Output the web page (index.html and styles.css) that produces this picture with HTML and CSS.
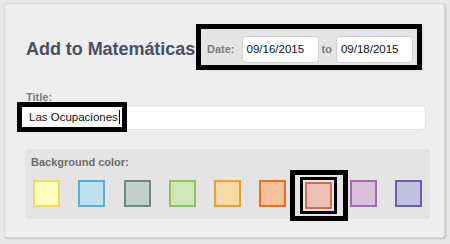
FILE: index.html
```html
<!DOCTYPE html>
<html>
<head>
<meta charset="utf-8">
<link rel="stylesheet" href="styles.css">
</head>
<body>
<div class="panel">
  <div class="header">
    <h1 class="heading">Add to Matemáticas</h1>
    <div class="date-box">
      <span class="label">Date:</span>
      <div class="field date-field">09/16/2015</div>
      <span class="label to">to</span>
      <div class="field date-field">09/18/2015</div>
    </div>
  </div>
  <div class="label title-label">Title:</div>
  <div class="field title-field">Las Ocupaciones<span class="caret"></span></div>
  <div class="bg-section">
    <div class="label">Background color:</div>
    <div class="swatches">
      <div class="swatch" style="background:#ffffbf;border-color:#f0dc5a"></div>
      <div class="swatch" style="background:#bfe0f0;border-color:#5aafd9"></div>
      <div class="swatch" style="background:#c0d0cd;border-color:#6b8a80"></div>
      <div class="swatch" style="background:#d0e8b8;border-color:#8fc35d"></div>
      <div class="swatch" style="background:#f8d9a8;border-color:#f0a02a"></div>
      <div class="swatch" style="background:#f8c09a;border-color:#f26d1c"></div>
      <div class="swatch selected" style="background:#ebc1b5;border-color:#d26b52"></div>
      <div class="swatch" style="background:#dbc0dc;border-color:#a26db0"></div>
      <div class="swatch" style="background:#c0c0e0;border-color:#6a5fb0"></div>
    </div>
  </div>
  <div class="mark mark-date"></div>
  <div class="mark mark-title"></div>
</div>
</body>
</html>
```
FILE: styles.css
```css
* { box-sizing: border-box; }
html, body { margin: 0; padding: 0; }
body {
  background: #e8e8e8;
  font-family: "Liberation Sans", Arial, Helvetica, sans-serif;
  width: 450px;
  height: 244px;
  overflow: hidden;
  padding: 3px 0 0 4px;
}
.panel {
  position: relative;
  width: 441px;
  height: 235px;
  background: #eeeeee;
  border: 1px solid #d8d8d8;
  border-radius: 3px;
  box-shadow: 1px 1px 2px rgba(0,0,0,0.18);
  padding: 23px 14px 0 15px;
}
.header {
  display: flex;
  align-items: center;
  justify-content: space-between;
  height: 44px;
}
.heading {
  margin: 1px 0 0 6px;
  font-size: 18px;
  font-weight: bold;
  color: #4a5060;
  letter-spacing: -0.05px;
}
.date-box {
  display: flex;
  align-items: center;
  width: 225px;
  height: 44px;
  margin-right: 6px;
  padding: 0 0 0 8px;
  background: #e4e4e4;
  border-radius: 2px;
}
.label {
  font-size: 11px;
  line-height: 13px;
  font-weight: bold;
  color: #7d7d7d;
}
.date-box .label { margin-right: 7px; }
.date-box .to { margin: 0 4px 0 3px; }
.field {
  background: #fff;
  border: 1px solid #d2d2d2;
  border-radius: 4px;
  font-size: 11.5px;
  color: #111;
}
.date-field {
  width: 77px;
  height: 27px;
  line-height: 25px;
  padding-left: 4px;
}
.title-label {
  margin: 20px 0 0 6px;
}
.title-field {
  width: 406px;
  height: 25px;
  line-height: 23px;
  padding-left: 8px;
  border-color: #e2e2e2;
  border-radius: 5px;
  box-shadow: inset 0 1px 1px rgba(0,0,0,0.06);
  margin-top: 1px;
}
.caret {
  display: inline-block;
  width: 1px;
  height: 14px;
  background: #000;
  vertical-align: -3px;
  margin-left: 1px;
}
.bg-section {
  margin: 19px 0 0 5px;
  width: 405px;
  height: 70px;
  background: #e4e4e4;
  padding: 7px 8px 0 6px;
  border-radius: 1px;
}
.bg-section .label { color: #6c6c6c; }
.swatches {
  display: flex;
  justify-content: space-between;
  align-items: flex-start;
  margin-top: 11px;
  padding-left: 2px;
}
.swatch {
  width: 27px;
  height: 27px;
  border: 2px solid;
}
.swatch.selected {
  position: relative;
  margin-top: 2px;
  box-shadow: 0 0 0 2px #e8e8e8, 0 0 0 5px #000;
}
.swatch.selected::after {
  content: "";
  position: absolute;
  top: -14px;
  bottom: -14px;
  left: -17px;
  right: -18px;
  border: 5px solid #000;
}
.mark {
  position: absolute;
  border: 5px solid #000;
}
.mark-date {
  left: 191px;
  top: 20px;
  width: 226px;
  height: 46px;
}
.mark-title {
  left: 12px;
  top: 98px;
  width: 110px;
  height: 30px;
}
```
